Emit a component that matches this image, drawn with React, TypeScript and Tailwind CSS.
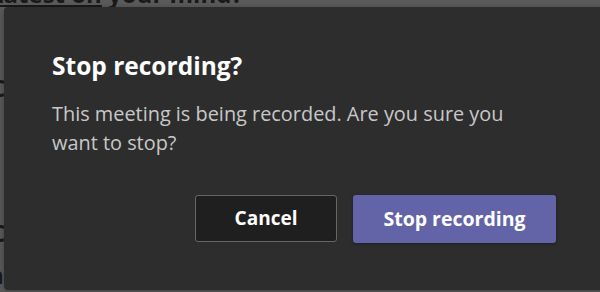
import React from "react";

export default function App() {
  return (
    <div
      className="relative w-[600px] h-[292px] overflow-hidden bg-[#5c5c5c]"
      style={{ fontFamily: '"Open Sans", "Noto Sans", sans-serif' }}
    >
      {/* page content behind the dialog */}
      <div className="flex flex-col -mt-[22px] -ml-[10px] text-[24px] leading-[32px] font-bold text-[#1a1a1a] whitespace-nowrap">
        <div>
          <span className="underline">Latest on</span> your mind?
        </div>
        <div className="mt-[62px]">C</div>
        <div className="mt-[113px]">C</div>
        <div className="mt-[10px] -ml-[2px]">n</div>
      </div>

      {/* dialog overlay */}
      <div className="absolute left-[4px] top-[7px] w-[640px] h-[283px] rounded-[4px] bg-[#2d2d2d] shadow-[0_2px_8px_rgba(0,0,0,0.35)]">
        <div className="flex flex-col pl-[48px] pt-[43px] w-[552px]">
          <h1 className="text-[24.5px] leading-[32px] font-bold text-white">Stop recording?</h1>
          <p className="mt-[17px] max-w-[480px] text-[19.9px] leading-[29px] text-[#c8c8c8]">
            This meeting is being recorded. Are you sure you want to stop?
          </p>
          <div className="flex justify-end gap-[16px] mt-[38px]">
            <button className="w-[142px] h-[47px] rounded-[3px] border border-[#666666] bg-[#1f1f1f] text-[19px] font-bold text-white">
              Cancel
            </button>
            <button className="w-[203px] h-[48px] rounded-[3px] bg-[#6264a7] text-[19.5px] font-bold text-white shadow-[0_1px_3px_rgba(0,0,0,0.35)]">
              Stop recording
            </button>
          </div>
        </div>
      </div>
    </div>
  );
}
